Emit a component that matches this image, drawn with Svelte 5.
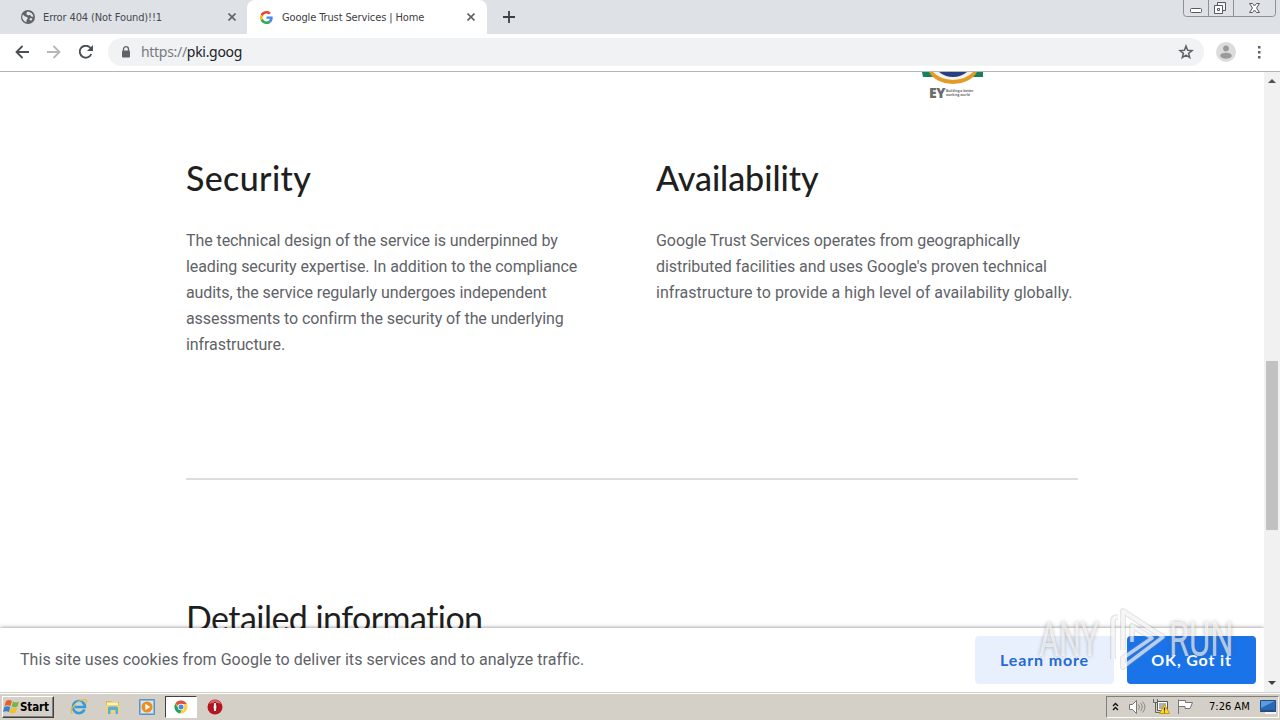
<script lang="ts">
	const sections = [
		{
			title: 'Security',
			lines: [
				'The technical design of the service is underpinned by',
				'leading security expertise. In addition to the compliance',
				'audits, the service regularly undergoes independent',
				'assessments to confirm the security of the underlying',
				'infrastructure.'
			]
		},
		{
			title: 'Availability',
			lines: [
				'Google Trust Services operates from geographically',
				"distributed facilities and uses Google's proven technical",
				'infrastructure to provide a high level of availability globally.'
			]
		}
	];
</script>

<div class="screen">
	<header class="tabs">
		<div class="tab">
			<svg class="tab__icon" width="14" height="14" viewBox="0 0 14 14">
				<circle cx="7" cy="7" r="7" fill="#5f6368" />
				<path d="M2 4.5 4 6.5l2 .5.8 1.8L5.5 10v2.3C3 11.500 1.300 9.500 1.200 6.500ZM6 1.800 5.200 4l2 1.500 1.800-.8 1.200 1.800 2.300.3C12 4 9.500 1.500 6 1.800ZM9 8l2.500.5-1.200 2.200L8.500 10Z" fill="#e5e7eb" />
			</svg>
			<span class="tab__title">Error 404 (Not Found)!!1</span>
			<svg class="tab__close" width="8" height="8" viewBox="0 0 8 8">
				<path d="m.5.5 7 7m0-7-7 7" stroke="#5f6368" stroke-width="1.600" />
			</svg>
		</div>
		<div class="tab tab--active">
			<svg class="tab__icon" width="13" height="13" viewBox="0 0 48 48">
				<path fill="#ea4335" d="M24 9.500c3.540 0 6.710 1.220 9.210 3.600l6.850-6.850C35.900 2.380 30.470 0 24 0 14.620 0 6.510 5.380 2.560 13.220l7.980 6.190C12.430 13.720 17.740 9.500 24 9.500z" />
				<path fill="#4285f4" d="M46.980 24.550c0-1.570-.15-3.090-.38-4.550H24v9.020h12.940c-.58 2.960-2.260 5.480-4.780 7.180l7.730 6c4.510-4.180 7.090-10.360 7.090-17.650z" />
				<path fill="#fbbc05" d="M10.530 28.590A14.500 14.500 0 0 1 9.770 24c0-1.600.27-3.140.76-4.590l-7.980-6.190A23.990 23.990 0 0 0 0 24c0 3.880.92 7.540 2.560 10.780z" />
				<path fill="#34a853" d="M24 48c6.480 0 11.930-2.130 15.890-5.810l-7.730-6c-2.150 1.450-4.920 2.300-8.160 2.300-6.260 0-11.570-4.220-13.470-9.910l-7.980 6.190C6.510 42.620 14.620 48 24 48z" />
			</svg>
			<span class="tab__title">Google Trust Services | Home</span>
			<svg class="tab__close" width="8" height="8" viewBox="0 0 8 8">
				<path d="m.5.5 7 7m0-7-7 7" stroke="#5f6368" stroke-width="1.600" />
			</svg>
		</div>
		<svg class="tabs__new" width="12" height="12" viewBox="0 0 12 12">
			<path d="M6 0v12M0 6h12" stroke="#3c4043" stroke-width="1.800" />
		</svg>
		<svg class="window-controls" width="94" height="18" viewBox="0 0 94 18">
			<path d="M.5 0v13.500q0 3 3 3h86q3 0 3-3V0M25.500 0v16.500M50.500 0v16.500" fill="none" stroke="#8d9199" />
			<rect x="7.500" y="8.500" width="11" height="4" rx="1" fill="#fff" stroke="#555a62" />
			<path d="M34.500 2.500h8v8h-8z" fill="#f3f4f6" stroke="#555a62" />
			<path d="M31.500 5.500h8v8h-8zM34.500 8.500h2v2h-2z" fill="#fff" stroke="#555a62" />
			<path d="M66.500 3.500h3l2 2.500 2-2.500h3l-3 4.500 3 4.500h-3l-2-2.500-2 2.500h-3l3-4.500z" fill="#fff" stroke="#555a62" />
		</svg>
	</header>

	<nav class="toolbar">
		<svg class="toolbar__nav" width="14" height="14" viewBox="0 0 14 14">
			<path d="M14 7H1.500M7.500 1l-6 6 6 6" fill="none" stroke="#4b4f54" stroke-width="1.800" />
		</svg>
		<svg class="toolbar__nav" width="14" height="14" viewBox="0 0 14 14">
			<path d="M0 7h12.500M6.500 1l6 6-6 6" fill="none" stroke="#b5b7ba" stroke-width="1.800" />
		</svg>
		<svg class="toolbar__nav" width="14" height="14" viewBox="0 0 14 14">
			<path d="M12.300 9A6 6 0 1 1 11.500 3" fill="none" stroke="#4b4f54" stroke-width="1.900" />
			<path d="M14 0v6H8z" fill="#4b4f54" />
		</svg>
		<div class="omnibox">
			<svg class="omnibox__lock" width="10" height="12" viewBox="0 0 10 12">
				<path d="M2.500 5V3.200a2.500 2.500 0 0 1 5 0V5" fill="none" stroke="#5f6368" stroke-width="1.300" />
				<rect x="1" y="4.500" width="8" height="7" rx="1" fill="#5f6368" />
			</svg>
			<span class="omnibox__url"><span class="omnibox__scheme">https://</span>pki.goog</span>
			<svg class="omnibox__star" width="16" height="16" viewBox="0 0 16 16">
				<path d="m8 2 1.600 4.200 4.400.3-3.400 2.800 1.100 4.300L8 11.200l-3.700 2.400 1.100-4.300L2 6.500l4.400-.3z" fill="none" stroke="#5f6368" stroke-width="1.500" />
			</svg>
		</div>
		<svg class="toolbar__avatar" width="20" height="20" viewBox="0 0 20 20">
			<circle cx="10" cy="10" r="10" fill="#dcdcdc" />
			<circle cx="10" cy="6.500" r="2.900" fill="#9a9a9a" />
			<ellipse cx="10" cy="13.700" rx="5.800" ry="3" fill="#9a9a9a" />
		</svg>
		<svg class="toolbar__menu" width="4" height="14" viewBox="0 0 4 14">
			<path d="M1 1h2.500v2.500H1zM1 6h2.500v2.500H1zM1 11h2.500v2.500H1z" fill="#5f6368" />
		</svg>
	</nav>

	<div class="viewport">
		<main class="page">
			<div class="seal">
				<svg width="62" height="14" viewBox="0 0 62 14">
					<path d="M0 0h61v5H50L44 0H18l-6 5H1z" fill="#16825a" />
					<path d="M7 0h48Q49 11 31 12 13 11 7 0z" fill="#e39a27" />
					<path d="M11 0h40Q44 7.500 31 8 18 7.500 11 0z" fill="#f3f3ed" />
					<path d="M17 0h28Q39 5 31 5 23 5 17 0z" fill="#27417f" />
				</svg>
				<div class="seal__brand">
					<span class="seal__ey">EY</span>
					<span class="seal__slogan">Building a better<br />working world</span>
				</div>
			</div>
			<div class="columns">
				{#each sections as section}
					<section class="column">
						<h2 class="heading">{section.title}</h2>
						<p class="text">
							{#each section.lines as line}
								<span class="text__line">{line}</span>
							{/each}
						</p>
					</section>
				{/each}
			</div>
			<hr class="divider" />
			<h2 class="heading heading--details">Detailed information</h2>
			<div class="cookies">
				<span class="cookies__text">This site uses cookies from Google to deliver its services and to analyze traffic.</span>
				<button class="button button--light">Learn more</button>
				<button class="button button--primary">OK, Got it</button>
			</div>
		</main>
		<div class="scrollbar">
			<svg width="8" height="4" viewBox="0 0 8 4"><path d="M0 4 4 0l4 4z" fill="#505050" /></svg>
			<div class="scrollbar__thumb"></div>
			<svg width="8" height="4" viewBox="0 0 8 4"><path d="m0 0 4 4 4-4z" fill="#404040" /></svg>
		</div>
	</div>

	<div class="watermark">
		<span class="watermark__any">ANY</span>
		<svg class="watermark__logo" width="58" height="66" viewBox="0 0 58 66">
			<g fill="none" stroke-linejoin="round">
				<path d="M4 52V14q0-4 5-4M14 43V4L54 30 14 60v-9l29-20-20-12v16" stroke="#888" stroke-opacity=".22" stroke-width="6" />
				<path d="M4 52V14q0-4 5-4M14 43V4L54 30 14 60v-9l29-20-20-12v16" stroke="#fff" stroke-opacity=".65" stroke-width="3.500" />
			</g>
		</svg>
		<span class="watermark__run">RUN</span>
	</div>

	<footer class="taskbar">
		<div class="start">
			<svg width="17" height="16" viewBox="0 0 17 16">
				<path d="M3 2q3-2 6 0L7.500 7q-3-1.500-6 0z" fill="#e4602c" />
				<path d="M10 2.500q3 1.700 6 0L14.500 7.500q-3 1.700-6 0z" fill="#79b743" />
				<path d="M1.300 8q3-1.500 6 0L6 13q-3-1.700-6 0z" fill="#3a7fc8" />
				<path d="M8.200 8.500q3 1.700 6 0l-1.500 5q-3 1.700-6 0z" fill="#f3bd2c" />
			</svg>
			<span class="start__label">Start</span>
		</div>
		<div class="launch">
			<svg width="18" height="18" viewBox="0 0 18 18">
				<path d="M14.500 11.500A6 6 0 1 1 15 9H5" fill="none" stroke="#349bd8" stroke-width="2.600" />
				<path d="M2.500 15.500C-2 14 5 4 12 2c5-1.500 5 1 4 3" fill="none" stroke="#e6b93c" stroke-width="1.300" />
				<path d="M5 6.500Q8 3 12 5" fill="none" stroke="#a8ddf5" />
			</svg>
		</div>
		<div class="launch">
			<svg width="16" height="16" viewBox="0 0 16 16">
				<path d="M1 2h5l1 1h7v11H1z" fill="#e0b94e" />
				<path d="M2 3.500h11V8H2z" fill="#fff3bb" />
				<path d="M1 6h14l-.5 8H1z" fill="#f1d374" />
				<path d="M3 15V9q0-1.500 1.500-1.500h7Q13 7.500 13 9v6h-2.500v-4h-5v4z" fill="#5aaed6" />
			</svg>
		</div>
		<div class="launch">
			<svg width="16" height="16" viewBox="0 0 16 16">
				<path d="M.5.500h15v15H.500z" fill="#8bbce0" stroke="#5d93bd" />
				<path d="M2 2h12v12H2z" fill="#d4e8f5" />
				<circle cx="8" cy="8" r="5.500" fill="#f28a1c" />
				<path d="m6.300 4.700 5 3.300-5 3.300z" fill="#fff" />
			</svg>
		</div>
		<div class="launch launch--active">
			<svg width="14" height="14" viewBox="0 0 14 14">
				<circle cx="7" cy="7" r="6.500" fill="#ffcf45" />
				<path d="M7 7 1.300 3.800A6.500 6.500 0 0 1 12.700 4H7z" fill="#dd5044" />
				<path d="M1.300 3.800 4.600 8.800 7.500 10 6 13.400A6.500 6.500 0 0 1 1.300 3.800z" fill="#1da362" />
				<circle cx="7" cy="7" r="3.200" fill="#fff" />
				<circle cx="7" cy="7" r="2.500" fill="#4a86e8" />
			</svg>
		</div>
		<div class="launch">
			<svg width="16" height="16" viewBox="0 0 16 16">
				<circle cx="8" cy="8" r="7.500" fill="#b91320" />
				<path d="M2 5a6.500 6.500 0 0 1 12 0Q8 2 2 5z" fill="#e0656b" />
				<ellipse cx="8" cy="8" rx="2" ry="5" fill="#f6eeee" stroke="#8b0b15" />
			</svg>
		</div>
		<div class="tray">
			<svg class="tray__chevron" width="7" height="9" viewBox="0 0 7 9">
				<path d="m1 4 2.500-2.500L6 4M1 8l2.500-2.500L6 8" fill="none" stroke="#111" stroke-width="1.400" />
			</svg>
			<svg class="tray__sound" width="17" height="14" viewBox="0 0 17 14">
				<path d="M.5 4.500h3l4-4v13l-4-4h-3z" fill="#fff" stroke="#777" />
				<path d="M9.500 4.500q2 2.500 0 5M11.500 3q3.500 4 0 8M13.500 1.500q5 5.500 0 11" fill="none" stroke="#888" />
			</svg>
			<svg class="tray__network" width="17" height="15" viewBox="0 0 17 15">
				<path d="M4.500 2.500h10v9h-10z" fill="#fff" stroke="#555" />
				<path d="M6 4h7v6H6z" fill="#aab1b7" />
				<path d="M.5 0v3.500h4V0M2.500 3.500v10h5" fill="none" stroke="#666" />
				<path d="m11.500 5.500 5 9h-10z" fill="#ffd83a" stroke="#c79a00" />
				<path d="M11.500 8.500v3M11.500 12.500v1" stroke="#222" stroke-width="1.200" />
			</svg>
			<svg class="tray__flag" width="17" height="15" viewBox="0 0 17 15">
				<path d="M1.500.500V15" stroke="#777" />
				<path d="M1.500 1.500h7v2h7L13 9.500H8v-2H1.500z" fill="#fff" stroke="#777" />
			</svg>
			<span class="tray__clock">7:26 AM</span>
			<svg class="tray__desktop" width="16" height="15" viewBox="0 0 16 15">
				<path d="M.5 1.500h15v10H.500z" fill="#2869b5" stroke="#1c4f8f" />
				<path d="M1 2h14L1 9z" fill="#5c9bdc" />
				<path d="M5 13h11v2H5z" fill="#f4f4f4" />
				<path d="M0 12h16v1H0z" fill="#34496b" />
			</svg>
		</div>
	</footer>
</div>

<style>
	:global(body) {
		margin: 0;
		overflow: hidden;
	}

	.screen {
		position: relative;
		display: flex;
		flex-direction: column;
		width: 1280px;
		height: 720px;
		overflow: hidden;
		background-color: #fff;
		font-family: Roboto, sans-serif;
	}

	.screen svg {
		display: block;
		flex: none;
	}

	/* browser tabs */
	.tabs {
		display: flex;
		height: 34px;
		background-color: #dee1e6;
		font-family: 'DejaVu Sans Condensed', 'Noto Sans', sans-serif;
		font-size: 11px;
		letter-spacing: -0.120px;
	}

	.tab {
		display: flex;
		align-items: center;
		box-sizing: border-box;
		width: 247px;
		height: 34px;
		padding: 0 11px 0 21px;
		color: #45494d;
	}

	.tab--active {
		width: 240px;
		padding: 0 12px 0 13px;
		border-radius: 8px 8px 0 0;
		background-color: #fff;
		color: #3c4043;
	}

	.tab__title {
		flex: 1;
		margin-left: 8px;
		white-space: nowrap;
	}

	.tab--active .tab__title {
		margin-left: 9px;
	}

	.tabs__new {
		margin: 11px auto 0 16px;
	}

	.window-controls {
		margin-right: 3px;
	}

	/* address bar */
	.toolbar {
		display: flex;
		align-items: center;
		box-sizing: border-box;
		height: 38px;
		padding: 0 19px 0 15px;
		border-bottom: 1px solid #b2b4b6;
	}

	.toolbar__nav {
		margin: -2px 18px 0 0;
	}

	.omnibox {
		display: flex;
		align-items: center;
		flex: 1;
		box-sizing: border-box;
		height: 28px;
		margin: -1px 0 0 -3px;
		padding: 0 10px 0 13px;
		border-radius: 14px;
		background-color: #f0f2f4;
	}

	.omnibox__url {
		flex: 1;
		margin-left: 10px;
		color: #202124;
		font-family: 'Noto Sans', sans-serif;
		font-size: 14px;
		letter-spacing: -0.300px;
		line-height: 20px;
	}

	.omnibox__scheme {
		color: #777b80;
	}

	.toolbar__avatar {
		margin: -2px 21px 0 12px;
	}

	.toolbar__menu {
		margin-top: -1px;
	}

	/* page */
	.viewport {
		display: flex;
		height: 620px;
	}

	.page {
		position: relative;
		width: 1264px;
		overflow: hidden;
	}

	.seal {
		width: 62px;
		height: 28px;
		margin-left: 922px;
	}

	.seal__brand {
		display: flex;
		align-items: center;
		gap: 1px;
		height: 13px;
		padding-left: 7px;
		color: #6b6b6b;
	}

	.seal__ey {
		font: 800 14px/13px 'Open Sans', sans-serif;
		letter-spacing: -0.500px;
	}

	.seal__slogan {
		font: bold 3.300px/4px 'Open Sans', sans-serif;
		white-space: nowrap;
	}

	.columns {
		display: flex;
		gap: 30px;
		height: 378px;
		padding-left: 186px;
	}

	.column {
		width: 440px;
		padding-top: 54px;
	}

	.heading {
		margin: 0;
		color: #1f1f1f;
		font: 500 34px/48px Lato, sans-serif;
		font-variant-ligatures: none;
		letter-spacing: 0.350px;
		white-space: nowrap;
	}

	.column:last-child .heading {
		letter-spacing: -0.050px;
	}

	.text {
		margin: 26px 0 0;
		color: #5f6368;
		font-size: 16px;
		letter-spacing: -0.080px;
		line-height: 26px;
	}

	.text__line {
		display: block;
		white-space: nowrap;
	}

	.column:last-child .text {
		letter-spacing: -0.060px;
	}

	.column:last-child .text__line:last-child {
		letter-spacing: 0.040px;
	}

	.divider {
		width: 892px;
		height: 2px;
		margin: 0 0 0 186px;
		border: 0;
		background-color: #dadce0;
	}

	.heading--details {
		margin: 114px 0 0 186px;
		font-weight: 400;
		letter-spacing: -0.550px;
	}

	.cookies {
		position: absolute;
		right: 0;
		bottom: 0;
		left: 0;
		display: flex;
		align-items: center;
		box-sizing: border-box;
		height: 64px;
		padding: 0 8px 0 20px;
		background-color: #fff;
		box-shadow: 0 0 4px rgba(0, 0, 0, 0.5);
	}

	.cookies__text {
		flex: 1;
		padding-bottom: 2px;
		color: #5f6368;
		font-size: 16px;
		letter-spacing: 0.045px;
		white-space: nowrap;
	}

	.button {
		height: 48px;
		padding: 0;
		border: 0;
		border-radius: 4px;
		font: bold 16px/48px Lato, sans-serif;
		letter-spacing: 0.850px;
		white-space: nowrap;
	}

	.button--light {
		width: 139px;
		margin-right: 13px;
		background-color: #e8f0fe;
		color: #2669d4;
	}

	.button--primary {
		width: 129px;
		background-color: #1a73e8;
		color: #fff;
	}

	.scrollbar {
		display: flex;
		flex-direction: column;
		align-items: center;
		box-sizing: border-box;
		width: 16px;
		padding: 7px 0;
		background-color: #f1f1f1;
	}

	.scrollbar__thumb {
		width: 12px;
		height: 169px;
		margin: 278px 0 auto;
		background-color: #c1c1c1;
	}

	/* overlay on the lower right corner */
	.watermark {
		position: absolute;
		top: 607px;
		left: 1039px;
		display: flex;
		align-items: center;
		width: 196px;
		height: 66px;
		color: rgba(255, 255, 255, 0.65);
		font: 48px/66px Roboto, sans-serif;
		text-shadow: 0 0 5px rgba(90, 90, 90, 0.45);
	}

	.watermark__any,
	.watermark__run {
		transform: scaleX(0.64);
		transform-origin: left;
	}

	.watermark__any {
		width: 70px;
	}

	.watermark__run {
		margin-left: 2px;
		transform: scaleX(0.68);
	}

	/* windows taskbar */
	.taskbar {
		display: flex;
		align-items: center;
		box-sizing: border-box;
		height: 28px;
		padding: 0 1px 0 2px;
		border-top: 1px solid #d4d0c8;
		background-color: #d4d0c8;
		box-shadow: inset 0 1px #fff;
		font-family: 'DejaVu Sans Condensed', 'Noto Sans', sans-serif;
	}

	.start {
		display: flex;
		align-items: center;
		box-sizing: border-box;
		width: 52px;
		height: 22px;
		margin-right: 9px;
		border: 1px solid;
		border-color: #fff #404040 #404040 #fff;
		box-shadow: inset -1px -1px #808080;
	}

	.start__label {
		color: #000;
		font-size: 11.500px;
		font-weight: bold;
		letter-spacing: -0.100px;
	}

	.launch {
		display: flex;
		align-items: center;
		justify-content: center;
		box-sizing: border-box;
		width: 32px;
		height: 22px;
		margin-right: 1.900px;
	}

	.launch--active {
		border: 1px solid;
		border-color: #404040 #fff #fff #404040;
		background-color: #fff;
	}

	.tray {
		display: flex;
		align-items: center;
		box-sizing: border-box;
		width: 173px;
		height: 22px;
		margin-left: auto;
		padding: 0 2px 0 5px;
		border: 1px solid;
		border-color: #808080 #fff #fff #808080;
	}

	.tray__sound {
		margin-left: 10px;
	}

	.tray__network {
		margin-left: 7px;
	}

	.tray__flag {
		margin-left: 7px;
	}

	.tray__clock {
		margin: 0 auto 0 15px;
		color: #000;
		font-size: 11px;
		white-space: nowrap;
	}
</style>
